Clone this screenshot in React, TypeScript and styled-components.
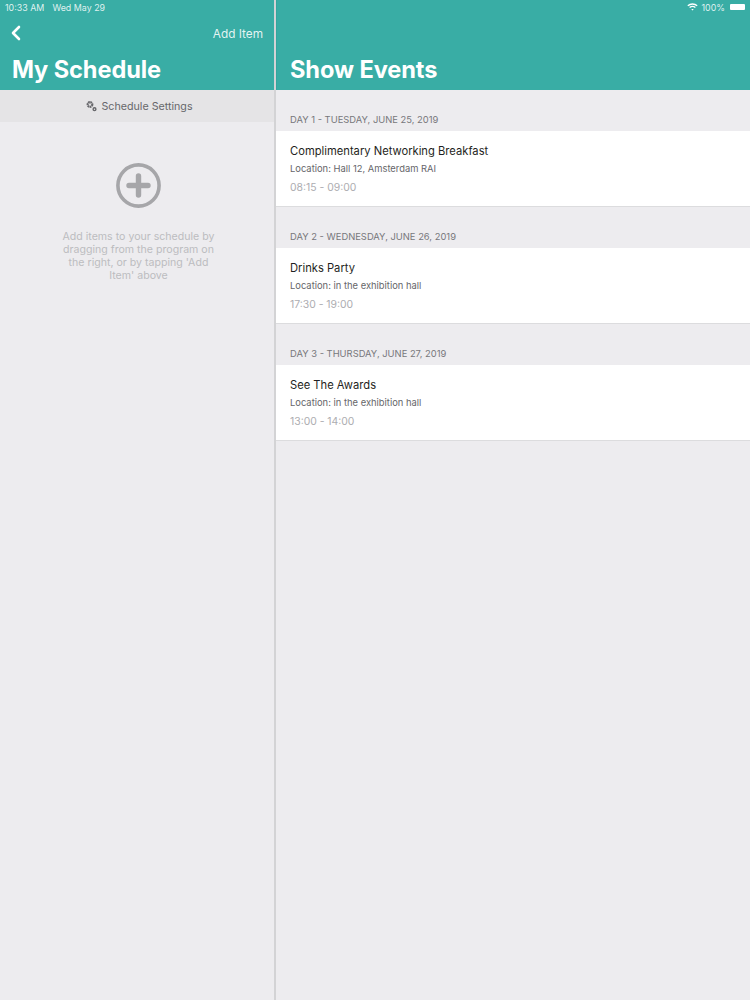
import styled, { createGlobalStyle } from 'styled-components';
import { ChevronLeft } from 'lucide-react';

const GlobalStyle = createGlobalStyle`
  html, body {
    margin: 0;
    padding: 0;
    background: #edecef;
    font-family: Inter, "Liberation Sans", sans-serif;
  }
`;

const Page = styled.div`
  position: relative;
  display: flex;
  width: 750px;
  height: 1000px;
  overflow: hidden;
`;

const StatusBar = styled.div`
  position: absolute;
  top: 0;
  left: 0;
  right: 0;
  height: 14px;
  padding: 0 5px;
  display: flex;
  align-items: center;
  justify-content: space-between;
  color: rgba(255, 255, 255, 0.85);
  font-size: 8.9px;
`;

const StatusLeft = styled.div`
  display: flex;
  gap: 8px;
`;

const StatusRight = styled.div`
  display: flex;
  align-items: center;
  gap: 3px;
`;

const Battery = styled.span`
  width: 15px;
  height: 6px;
  margin-left: 2px;
  background: #fff;
  border-radius: 1px;
`;

const Sidebar = styled.aside`
  width: 274px;
  flex: none;
  display: flex;
  flex-direction: column;
  border-right: 2px solid #d3d3d5;
`;

const Main = styled.main`
  flex: 1;
  display: flex;
  flex-direction: column;
`;

const Header = styled.header`
  height: 90px;
  box-sizing: border-box;
  flex: none;
  background: #39ada5;
  color: #fff;
  display: flex;
  flex-direction: column;
  justify-content: flex-end;
  padding: 0 11px 5px 12px;
`;

const MainHeader = styled(Header)`
  padding: 0 14px 5px 13px;
  border-left: 1px solid #35a59d;
`;

const NavRow = styled.div`
  display: flex;
  align-items: center;
  justify-content: space-between;
  height: 24px;
  margin-bottom: 9px;
`;

const BackButton = styled.span`
  display: flex;
  margin: -2px 0 0 -8px;
`;

const AddItem = styled.span`
  font-size: 11.8px;
  color: rgba(255, 255, 255, 0.88);
`;

const Title = styled.h1`
  margin: 0;
  font-size: 23.6px;
  line-height: 30px;
  font-weight: 700;
  letter-spacing: -0.1px;
`;

const SettingsBar = styled.div`
  height: 32px;
  flex: none;
  background: #e5e4e6;
  display: flex;
  align-items: center;
  justify-content: center;
  gap: 4px;
  padding-left: 5px;
  font-size: 10.7px;
  color: #67676b;
`;

const EmptyState = styled.div`
  display: flex;
  flex-direction: column;
  align-items: center;
  padding: 41px 0 0 3px;
`;

const Hint = styled.p`
  width: 165px;
  margin: 22px 0 0;
  text-align: center;
  font-size: 10.6px;
  line-height: 13px;
  color: #bcbcc0;
`;

const Section = styled.section`
  display: flex;
  flex-direction: column;
`;

const DayLabel = styled.div`
  height: 41px;
  box-sizing: border-box;
  padding: 0 0 6px 14px;
  display: flex;
  align-items: flex-end;
  font-size: 9.4px;
  color: #77777b;
`;

const EventRow = styled.div`
  height: 76px;
  box-sizing: border-box;
  padding: 13px 14px 0;
  background: #fff;
  border-bottom: 1px solid #dcdcde;
  display: flex;
  flex-direction: column;
`;

const EventName = styled.div`
  font-size: 11.2px;
  line-height: 15px;
  color: #1f1f22;
`;

const EventLocation = styled.div`
  margin-top: 4px;
  font-size: 9.4px;
  line-height: 12px;
  color: #66666a;
`;

const EventTime = styled.div`
  margin-top: 6px;
  font-size: 10.4px;
  line-height: 14px;
  color: #adadb1;
`;

const events = [
  { day: 'DAY 1 - TUESDAY, JUNE 25, 2019', name: 'Complimentary Networking Breakfast', location: 'Location: Hall 12, Amsterdam RAI', time: '08:15 - 09:00' },
  { day: 'DAY 2 - WEDNESDAY, JUNE 26, 2019', name: 'Drinks Party', location: 'Location: in the exhibition hall', time: '17:30 - 19:00' },
  { day: 'DAY 3 - THURSDAY, JUNE 27, 2019', name: 'See The Awards', location: 'Location: in the exhibition hall', time: '13:00 - 14:00' },
];

function Gears() {
  return (
    <svg width="11" height="12" viewBox="0 0 11 12" fill="none" stroke="#67676b">
      <circle cx="4" cy="4.5" r="2.3" strokeWidth="2.2" strokeDasharray="1.6 0.4" />
      <circle cx="8.5" cy="9.2" r="1.4" strokeWidth="1.4" />
    </svg>
  );
}

function WifiIcon() {
  return (
    <svg width="11" height="8" viewBox="0 0 11 8" fill="none" stroke="#fff" strokeWidth="1.3">
      <path d="M0.8 2.8C3.4 0.4 7.6 0.4 10.2 2.8" />
      <path d="M2.6 4.6C4.2 3.2 6.8 3.2 8.4 4.6" />
      <path d="M4.4 6.4L5.5 7.4L6.6 6.4C6 5.8 5 5.8 4.4 6.4Z" fill="#fff" stroke="none" />
    </svg>
  );
}

function PlusCircle() {
  return (
    <svg width="45" height="45" viewBox="0 0 45 45" fill="none" stroke="#a6a6a9">
      <circle cx="22.5" cy="22.5" r="20.6" strokeWidth="3.6" />
      <path d="M13 22.5H32M22.5 13V32" strokeWidth="5.4" strokeLinecap="round" />
    </svg>
  );
}

export default function App() {
  return (
    <Page>
      <GlobalStyle />
      <StatusBar>
        <StatusLeft>
          <span>10:33 AM</span>
          <span>Wed May 29</span>
        </StatusLeft>
        <StatusRight>
          <WifiIcon />
          <span>100%</span>
          <Battery />
        </StatusRight>
      </StatusBar>
      <Sidebar>
        <Header>
          <NavRow>
            <BackButton>
              <ChevronLeft size={24} strokeWidth={2.6} />
            </BackButton>
            <AddItem>Add Item</AddItem>
          </NavRow>
          <Title>My Schedule</Title>
        </Header>
        <SettingsBar>
          <Gears />
          <span>Schedule Settings</span>
        </SettingsBar>
        <EmptyState>
          <PlusCircle />
          <Hint>Add items to your schedule by dragging from the program on the right, or by tapping 'Add Item' above</Hint>
        </EmptyState>
      </Sidebar>
      <Main>
        <MainHeader>
          <Title>Show Events</Title>
        </MainHeader>
        {events.map((e) => (
          <Section key={e.day}>
            <DayLabel>{e.day}</DayLabel>
            <EventRow>
              <EventName>{e.name}</EventName>
              <EventLocation>{e.location}</EventLocation>
              <EventTime>{e.time}</EventTime>
            </EventRow>
          </Section>
        ))}
      </Main>
    </Page>
  );
}
